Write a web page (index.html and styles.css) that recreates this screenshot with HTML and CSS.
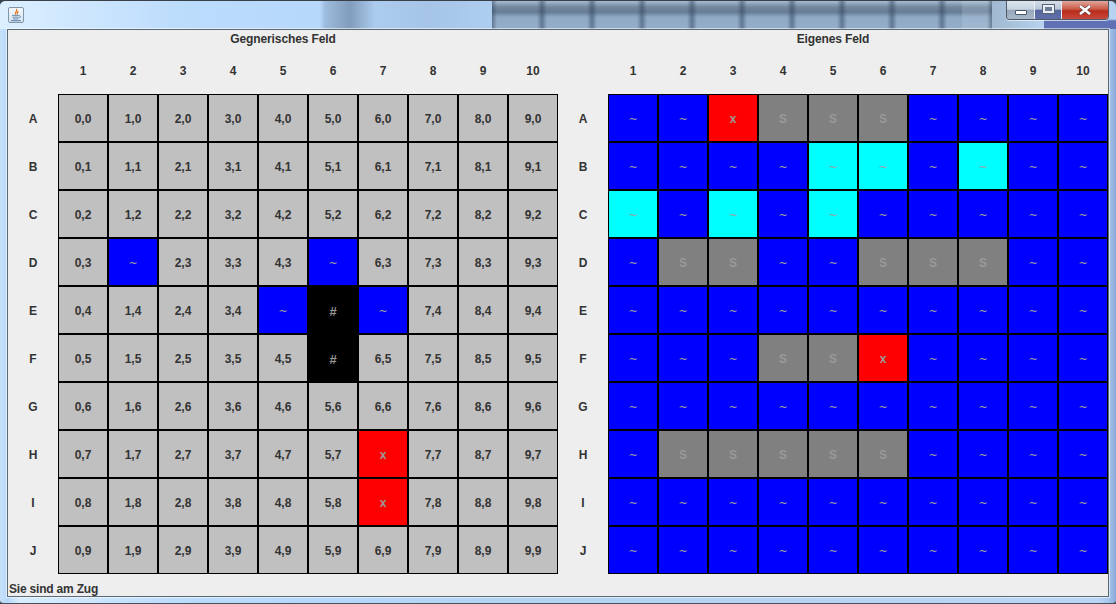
FILE: index.html
```html
<!DOCTYPE html>
<html lang="de">
<head>
<meta charset="utf-8">
<title>Schiffe versenken</title>
<link rel="stylesheet" href="styles.css">
</head>
<body>
<div class="window">
  <header class="titlebar">
    <div class="appicon">
      <svg width="16" height="16" viewBox="0 0 16 16">
        <path d="M8.500 1C10 3.500 6.500 4.500 7.500 7.500M10.500 3.500C9.500 5 9 5.500 9.500 7.500" fill="none" stroke="#e8701a" stroke-width="1.3"/>
        <path d="M3.500 8.500h8M4 10.500h7M4.500 12.500h6" stroke="#5b86ac" stroke-width="1"/>
        <path d="M11.500 9c2.500-.5 2.500 2-.5 2.500" fill="none" stroke="#5b86ac" stroke-width="1"/>
        <path d="M2.500 14.500h11" stroke="#3f6f99" stroke-width="1"/>
      </svg>
    </div>
    <div class="winbtns">
      <div class="wb wb-min"><span class="glyph-min"></span></div>
      <div class="wb wb-max"><span class="glyph-max"></span></div>
      <div class="wb wb-close">
        <svg width="14" height="10" viewBox="0 0 14 10"><path d="M2 1 12 9M12 1 2 9" stroke="#4a3030" stroke-width="3.600"/><path d="M2 1 12 9M12 1 2 9" stroke="#fff" stroke-width="2.600"/></svg>
      </div>
    </div>
  </header>
  <main class="content">
    <div class="boards">
      <section class="panel">
        <h2 class="ptitle">Gegnerisches Feld</h2>
        <div class="board">
          <div class="lb"></div><div class="lb">1</div><div class="lb">2</div><div class="lb">3</div><div class="lb">4</div><div class="lb">5</div><div class="lb">6</div><div class="lb">7</div><div class="lb">8</div><div class="lb">9</div><div class="lb">10</div>

          <div class="lb">A</div><div class="c">0,0</div><div class="c">1,0</div><div class="c">2,0</div><div class="c">3,0</div><div class="c">4,0</div><div class="c">5,0</div><div class="c">6,0</div><div class="c">7,0</div><div class="c">8,0</div><div class="c">9,0</div>

          <div class="lb">B</div><div class="c">0,1</div><div class="c">1,1</div><div class="c">2,1</div><div class="c">3,1</div><div class="c">4,1</div><div class="c">5,1</div><div class="c">6,1</div><div class="c">7,1</div><div class="c">8,1</div><div class="c">9,1</div>

          <div class="lb">C</div><div class="c">0,2</div><div class="c">1,2</div><div class="c">2,2</div><div class="c">3,2</div><div class="c">4,2</div><div class="c">5,2</div><div class="c">6,2</div><div class="c">7,2</div><div class="c">8,2</div><div class="c">9,2</div>

          <div class="lb">D</div><div class="c">0,3</div><div class="c w">~</div><div class="c">2,3</div><div class="c">3,3</div><div class="c">4,3</div><div class="c w">~</div><div class="c">6,3</div><div class="c">7,3</div><div class="c">8,3</div><div class="c">9,3</div>

          <div class="lb">E</div><div class="c">0,4</div><div class="c">1,4</div><div class="c">2,4</div><div class="c">3,4</div><div class="c w">~</div><div class="c k">#</div><div class="c w">~</div><div class="c">7,4</div><div class="c">8,4</div><div class="c">9,4</div>

          <div class="lb">F</div><div class="c">0,5</div><div class="c">1,5</div><div class="c">2,5</div><div class="c">3,5</div><div class="c">4,5</div><div class="c k">#</div><div class="c">6,5</div><div class="c">7,5</div><div class="c">8,5</div><div class="c">9,5</div>

          <div class="lb">G</div><div class="c">0,6</div><div class="c">1,6</div><div class="c">2,6</div><div class="c">3,6</div><div class="c">4,6</div><div class="c">5,6</div><div class="c">6,6</div><div class="c">7,6</div><div class="c">8,6</div><div class="c">9,6</div>

          <div class="lb">H</div><div class="c">0,7</div><div class="c">1,7</div><div class="c">2,7</div><div class="c">3,7</div><div class="c">4,7</div><div class="c">5,7</div><div class="c r">x</div><div class="c">7,7</div><div class="c">8,7</div><div class="c">9,7</div>

          <div class="lb">I</div><div class="c">0,8</div><div class="c">1,8</div><div class="c">2,8</div><div class="c">3,8</div><div class="c">4,8</div><div class="c">5,8</div><div class="c r">x</div><div class="c">7,8</div><div class="c">8,8</div><div class="c">9,8</div>

          <div class="lb">J</div><div class="c">0,9</div><div class="c">1,9</div><div class="c">2,9</div><div class="c">3,9</div><div class="c">4,9</div><div class="c">5,9</div><div class="c">6,9</div><div class="c">7,9</div><div class="c">8,9</div><div class="c">9,9</div>
        </div>
      </section>
      <section class="panel">
        <h2 class="ptitle">Eigenes Feld</h2>
        <div class="board">
          <div class="lb"></div><div class="lb">1</div><div class="lb">2</div><div class="lb">3</div><div class="lb">4</div><div class="lb">5</div><div class="lb">6</div><div class="lb">7</div><div class="lb">8</div><div class="lb">9</div><div class="lb">10</div>

          <div class="lb">A</div><div class="c w">~</div><div class="c w">~</div><div class="c r">x</div><div class="c s">S</div><div class="c s">S</div><div class="c s">S</div><div class="c w">~</div><div class="c w">~</div><div class="c w">~</div><div class="c w">~</div>

          <div class="lb">B</div><div class="c w">~</div><div class="c w">~</div><div class="c w">~</div><div class="c w">~</div><div class="c m">~</div><div class="c m">~</div><div class="c w">~</div><div class="c m">~</div><div class="c w">~</div><div class="c w">~</div>

          <div class="lb">C</div><div class="c m">~</div><div class="c w">~</div><div class="c m">~</div><div class="c w">~</div><div class="c m">~</div><div class="c w">~</div><div class="c w">~</div><div class="c w">~</div><div class="c w">~</div><div class="c w">~</div>

          <div class="lb">D</div><div class="c w">~</div><div class="c s">S</div><div class="c s">S</div><div class="c w">~</div><div class="c w">~</div><div class="c s">S</div><div class="c s">S</div><div class="c s">S</div><div class="c w">~</div><div class="c w">~</div>

          <div class="lb">E</div><div class="c w">~</div><div class="c w">~</div><div class="c w">~</div><div class="c w">~</div><div class="c w">~</div><div class="c w">~</div><div class="c w">~</div><div class="c w">~</div><div class="c w">~</div><div class="c w">~</div>

          <div class="lb">F</div><div class="c w">~</div><div class="c w">~</div><div class="c w">~</div><div class="c s">S</div><div class="c s">S</div><div class="c r">x</div><div class="c w">~</div><div class="c w">~</div><div class="c w">~</div><div class="c w">~</div>

          <div class="lb">G</div><div class="c w">~</div><div class="c w">~</div><div class="c w">~</div><div class="c w">~</div><div class="c w">~</div><div class="c w">~</div><div class="c w">~</div><div class="c w">~</div><div class="c w">~</div><div class="c w">~</div>

          <div class="lb">H</div><div class="c w">~</div><div class="c s">S</div><div class="c s">S</div><div class="c s">S</div><div class="c s">S</div><div class="c s">S</div><div class="c w">~</div><div class="c w">~</div><div class="c w">~</div><div class="c w">~</div>

          <div class="lb">I</div><div class="c w">~</div><div class="c w">~</div><div class="c w">~</div><div class="c w">~</div><div class="c w">~</div><div class="c w">~</div><div class="c w">~</div><div class="c w">~</div><div class="c w">~</div><div class="c w">~</div>

          <div class="lb">J</div><div class="c w">~</div><div class="c w">~</div><div class="c w">~</div><div class="c w">~</div><div class="c w">~</div><div class="c w">~</div><div class="c w">~</div><div class="c w">~</div><div class="c w">~</div><div class="c w">~</div>
        </div>
      </section>
    </div>
    <div class="status">Sie sind am Zug</div>
  </main>
</div>
</body>
</html>
```
FILE: styles.css
```css
* { box-sizing: border-box; }
html, body { margin: 0; padding: 0; }
body {
  width: 1116px;
  height: 604px;
  overflow: hidden;
  background: #3a4048;
  font-family: "Liberation Sans", Arial, sans-serif;
  font-size: 12px;
  font-weight: bold;
  color: #333;
}
.window {
  width: 1116px;
  height: 604px;
  display: flex;
  flex-direction: column;
  padding: 0 7px 6px;
  border-top: 1px solid #3a4048;
  border-bottom: 1px solid #4a5058;
  border-radius: 6px 6px 4px 4px;
  background:
    linear-gradient(90deg, #c6e0fa 0, #b8d8fa 8px, rgba(184,216,250,0) 20px, rgba(184,216,250,0) 1098px, #a9c8ee 1108px, #8aa8d8 1116px),
    linear-gradient(90deg, #dcefff 0, #bcdcfc 180px, #b6d8fb 320px, #b4d4f4 500px, #b8d6f6 1116px);
}
.titlebar {
  height: 28px;
  margin: 0 -7px;
  padding: 0 7px 0 8px;
  display: flex;
  align-items: flex-start;
  justify-content: space-between;
  border-radius: 6px 6px 0 0;
  background:
    linear-gradient(180deg, rgba(94,110,180,0) 0, rgba(94,110,180,0) 18px, #5f70b4 20px) 1044px 0 / 72px 100% no-repeat,
    repeating-linear-gradient(90deg, rgba(45,65,90,.5) 0, rgba(45,65,90,0) 5px, rgba(45,65,90,0) 45px, rgba(45,65,90,.5) 50px) 492px 0 / 500px 100% no-repeat,
    linear-gradient(180deg, #a6bcd4 0, #74889e 6px, #667c94 11px, #8ea9c4 16px, #94aeca 28px) 492px 0 / 470px 100% no-repeat,
    linear-gradient(180deg, #b0c4d8 0, #8498ae 6px, #7c92a8 11px, #9ab2cc 16px, #a0b8d0 28px) 962px 0 / 30px 100% no-repeat,
    linear-gradient(90deg, #a0b8d0 0, #b6d2ee 100%) 992px 0 / 52px 100% no-repeat,
    linear-gradient(90deg, rgba(130,155,185,0) 0, rgba(130,155,185,.45) 5px, rgba(100,125,155,.65) 30px, rgba(130,155,185,.2) 55px, rgba(130,155,185,.3) 110px, rgba(130,155,185,.15) 172px) 320px 0 / 172px 100% no-repeat,
    linear-gradient(90deg, #dcefff 0, #bcdcfc 180px, #b6d8fb 320px, #b6d4f2 1044px);
}
.appicon {
  width: 16px;
  height: 16px;
  margin-top: 6px;
  border: 1px solid #7f95a8;
  border-radius: 2px;
  background: linear-gradient(180deg, #f4f8fc, #d6e2ee);
  display: flex;
  align-items: center;
  justify-content: center;
}
.appicon svg { width: 14px; height: 14px; }
.winbtns {
  display: flex;
  height: 19px;
  border: 1px solid #4f5a68;
  border-top: 0;
  border-radius: 0 0 4px 4px;
  overflow: hidden;
  box-shadow: 0 1px 0 rgba(255,255,255,.6);
}
.wb {
  height: 18px;
  display: flex;
  align-items: center;
  justify-content: center;
  border-right: 1px solid #e8eef4;
}
.wb-min { width: 28px; background: linear-gradient(180deg, #dde6ee 0, #c8d4e0 45%, #97a8bc 52%, #a8b8ca 100%); }
.wb-max { width: 27px; background: linear-gradient(180deg, #d4dfe9 0, #b9c6d8 45%, #56669f 52%, #6070a8 100%); }
.wb-close { width: 46px; border-right: 0; background: linear-gradient(180deg, #dfa79c 0, #cb5a46 45%, #b92c1c 55%, #c8483a 100%); }
.glyph-min {
  width: 12px;
  height: 5px;
  margin-top: 5px;
  background: #fff;
  border: 1px solid #4a5666;
  border-radius: 1px;
}
.glyph-max {
  width: 11px;
  height: 8px;
  margin-top: -2px;
  background: #6c7c96;
  border: 2px solid #e8eef4;
  outline: 1px solid #5a6676;
}
.content {
  flex: 1;
  display: flex;
  flex-direction: column;
  border: 1px solid #5a6874;
  background: #eee;
  min-height: 0;
  box-shadow: 0 0 0 1px rgba(255,255,255,.55);
}
.boards { display: flex; }
.panel { width: 550px; }
.ptitle {
  margin: 0;
  height: 16px;
  font-size: 12px;
  line-height: 18px;
  font-weight: bold;
  letter-spacing: -.12px;
  text-align: center;
}
.board {
  display: grid;
  grid-template-columns: repeat(11, 50px);
  grid-auto-rows: 48px;
}
.lb, .c {
  display: flex;
  align-items: center;
  justify-content: center;
  padding-top: 2px;
}
.c {
  border: 1px solid #000;
  background: #c0c0c0;
}
.w, .m {
  font-family: "DejaVu Sans", sans-serif;
  font-size: 11px;
  font-weight: normal;
  color: #a0a0a0;
}
.w { background: #0000ff; }
.m { background: #00ffff; }
.r { background: #ff0000; color: #999; }
.s { background: #808080; color: #999; }
.k { background: #000; color: #999; font-size: 13px; }
.status {
  flex: 1;
  display: flex;
  align-items: flex-end;
  padding-left: 1px;
  letter-spacing: -.2px;
  line-height: 13px;
}
```
